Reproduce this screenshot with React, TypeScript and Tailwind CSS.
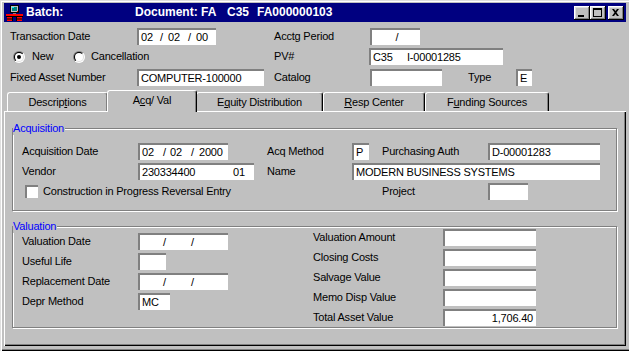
import React from "react";

function Field({ w, children, className = "" }: { w: string; children?: React.ReactNode; className?: string }) {
  return (
    <div
      className={`h-[17px] shrink-0 bg-white border-t-2 border-l-2 border-[#808080] flex items-center pl-[2px] whitespace-pre overflow-hidden ${w} ${className}`}
    >
      {children}
    </div>
  );
}

function Radio({ checked }: { checked?: boolean }) {
  return (
    <svg width="12" height="12" viewBox="0 0 12 12" className="shrink-0">
      <defs>
        <linearGradient id="rOuter" x1="0" y1="0" x2="1" y2="1">
          <stop offset="0.5" stopColor="#808080" />
          <stop offset="0.5" stopColor="#ffffff" />
        </linearGradient>
        <linearGradient id="rInner" x1="0" y1="0" x2="1" y2="1">
          <stop offset="0.5" stopColor="#000000" />
          <stop offset="0.5" stopColor="#dfdfdf" />
        </linearGradient>
      </defs>
      <circle cx="6" cy="6" r="6" fill="url(#rOuter)" />
      <circle cx="6" cy="6" r="5" fill="url(#rInner)" />
      <circle cx="6" cy="6" r="4" fill="#ffffff" />
      {checked && <circle cx="6" cy="6" r="2" fill="#000000" />}
    </svg>
  );
}

function TitleButton({ kind }: { kind: "min" | "max" | "close" }) {
  return (
    <div className="w-[16px] h-[14px] bg-[#c0c0c0] shadow-[inset_-1px_-1px_0_#000,inset_1px_1px_0_#fff,inset_-2px_-2px_0_#808080,inset_2px_2px_0_#dfdfdf]">
      <svg width="16" height="14" viewBox="0 0 16 14">
        {kind === "min" && <rect x="4" y="9" width="6" height="2" fill="#000" />}
        {kind === "max" && (
          <>
            <rect x="3.5" y="2.5" width="8" height="8" fill="none" stroke="#000" />
            <rect x="3" y="2" width="9" height="2" fill="#000" />
          </>
        )}
        {kind === "close" && (
          <path d="M4 3h2l1.5 2 1.5-2h2l-2.5 3.5 2.5 3.5h-2l-1.5-2-1.5 2h-2l2.5-3.5z" fill="#000" />
        )}
      </svg>
    </div>
  );
}

function AppIcon() {
  return (
    <svg width="18" height="17" viewBox="0 0 18 17" className="shrink-0">
      {/* monitor */}
      <rect x="5" y="1" width="9" height="8" fill="#000" />
      <rect x="6" y="2" width="7" height="6" fill="#c0c0c0" />
      <rect x="7" y="3" width="5" height="4" fill="#008080" />
      <rect x="7" y="3" width="2" height="1" fill="#00ffff" />
      <rect x="12" y="7" width="1" height="1" fill="#ff0000" />
      <rect x="8" y="9" width="3" height="1" fill="#808080" />
      {/* desk */}
      <rect x="1" y="10" width="17" height="2" fill="#ff0000" />
      <rect x="1" y="12" width="17" height="1" fill="#000" />
      <rect x="2" y="13" width="5" height="4" fill="#ff0000" />
      <rect x="12" y="13" width="5" height="4" fill="#ff0000" />
      <rect x="2" y="14.5" width="5" height="1" fill="#000" />
      <rect x="12" y="14.5" width="5" height="1" fill="#000" />
      <rect x="7" y="13" width="1" height="4" fill="#000" />
      <rect x="11" y="13" width="1" height="4" fill="#000" />
    </svg>
  );
}

function Tab({ w, selected, children }: { w: string; selected?: boolean; children: React.ReactNode }) {
  return (
    <div
      className={`${w} shrink-0 bg-[#c0c0c0] border-t border-l border-r border-t-white border-l-white border-r-black rounded-tl-[3px] rounded-tr-[3px] shadow-[inset_-1px_0_0_#808080] flex items-center justify-center ${
        selected ? "relative z-10 -mx-px -mb-px h-[22px] pb-[2px]" : "h-[19px]"
      }`}
    >
      {children}
    </div>
  );
}

function Group({ title, className, children }: { title: string; className: string; children: React.ReactNode }) {
  return (
    <div
      className={`relative ml-[8px] w-[605px] border border-[#808080] shadow-[inset_1px_1px_0_#fff,1px_1px_0_#fff] ${className}`}
    >
      <span className="absolute left-0 top-[-7px] bg-[#c0c0c0] text-[#0000ff] pr-px leading-[13px]">{title}</span>
      {children}
    </div>
  );
}

export default function App() {
  return (
    <div className="w-[629px] h-[351px] overflow-hidden bg-[#c0c0c0] font-['Liberation_Sans',Arial,sans-serif] text-[11px] leading-[13px] tracking-[-0.2px] text-black pt-[3px] pl-[4px] pr-[3px] shadow-[inset_1px_1px_0_#dfdfdf,inset_2px_2px_0_#fff,inset_0_-1px_0_#000,inset_0_-2px_0_#808080]">
      {/* Title bar */}
      <div className="h-[19px] bg-[#000080] flex items-center pl-px pr-[2px] text-white font-bold text-[12px] tracking-normal">
        <AppIcon />
        <span className="ml-[3px] w-[109px]">Batch:</span>
        <span className="w-[92px]">Document: FA</span>
        <span className="w-[30px]">C35</span>
        <span>FA000000103</span>
        <div className="ml-auto flex items-center">
          <TitleButton kind="min" />
          <TitleButton kind="max" />
          <div className="ml-[2px]">
            <TitleButton kind="close" />
          </div>
        </div>
      </div>

      {/* Header fields */}
      <div className="mt-[4px] pl-[6px]">
        <div className="h-[20px] flex items-center">
          <div className="w-[264px] flex items-center">
            <span className="w-[127px]">Transaction Date</span>
            <Field w="w-[79px]">
              <span className="w-[19px]">02</span>
              <span className="w-[8px]">/</span>
              <span className="w-[20px]">02</span>
              <span className="w-[8px]">/</span>
              <span>00</span>
            </Field>
          </div>
          <span className="w-[96px]">Acctg Period</span>
          <Field w="w-[50px]" className="justify-center pl-0">/</Field>
        </div>
        <div className="h-[21px] flex items-center">
          <div className="w-[264px] flex items-center">
            <div className="ml-[3px] w-[60px] flex items-center gap-[7px]">
              <Radio checked />
              <span>New</span>
            </div>
            <div className="flex items-center gap-[6px]">
              <Radio />
              <span>Cancellation</span>
            </div>
          </div>
          <span className="w-[95px]">PV#</span>
          <Field w="w-[134px]">
            <span className="w-[34px]">C35</span>
            <span>I-00001285</span>
          </Field>
        </div>
        <div className="h-[21px] flex items-center">
          <div className="w-[264px] flex items-center">
            <span className="w-[127px]">Fixed Asset Number</span>
            <Field w="w-[127px]">COMPUTER-100000</Field>
          </div>
          <span className="w-[96px]">Catalog</span>
          <Field w="w-[72px]" />
          <span className="ml-[26px] w-[48px]">Type</span>
          <Field w="w-[16px]">E</Field>
        </div>
      </div>

      {/* Tabs */}
      <div className="mt-[2px] h-[21px] pl-[3px] flex items-end">
        <Tab w="w-[101px]">
          <span>Descrip<u>t</u>ions</span>
        </Tab>
        <Tab w="w-[90px]" selected>
          <span>A<u>c</u>q/ Val</span>
        </Tab>
        <Tab w="w-[127px]">
          <span>E<u>q</u>uity Distribution</span>
        </Tab>
        <Tab w="w-[102px]">
          <span><u>R</u>esp Center</span>
        </Tab>
        <Tab w="w-[124px]">
          <span>F<u>u</u>nding Sources</span>
        </Tab>
      </div>

      {/* Tab panel */}
      <div className="w-[622px] h-[235px] pt-[17px] shadow-[inset_1px_1px_0_#fff,inset_-1px_-1px_0_#000,inset_-2px_-2px_0_#808080]">
        <Group title="Acquisition" className="h-[83px] pt-[12px] pl-[9px]">
          <div className="h-[20px] flex items-center">
            <span className="w-[116px]">Acquisition Date</span>
            <Field w="w-[90px]">
              <span className="w-[21px]">02</span>
              <span className="w-[7px]">/</span>
              <span className="w-[21px]">02</span>
              <span className="w-[8px]">/</span>
              <span>2000</span>
            </Field>
            <span className="ml-[39px] w-[85px]">Acq Method</span>
            <Field w="w-[17px]">P</Field>
            <span className="ml-[13px] w-[106px]">Purchasing Auth</span>
            <Field w="w-[112px]">D-00001283</Field>
          </div>
          <div className="h-[20px] flex items-center">
            <span className="w-[116px]">Vendor</span>
            <Field w="w-[116px]">
              <span className="w-[91px]">230334400</span>
              <span>01</span>
            </Field>
            <span className="ml-[13px] w-[85px]">Name</span>
            <Field w="w-[248px]">MODERN BUSINESS SYSTEMS</Field>
          </div>
          <div className="h-[20px] flex items-center">
            <div className="w-[360px] flex items-center">
              <div className="ml-[3px] w-[13px] h-[13px] bg-white border-t-2 border-l-2 border-[#808080]" />
              <span className="ml-[5px]">Construction in Progress Reversal Entry</span>
            </div>
            <span className="w-[106px]">Project</span>
            <Field w="w-[40px]" />
          </div>
        </Group>

        <Group title="Valuation" className="mt-[15px] h-[102px] flex">
          <div className="w-[300px] pl-[9px] pt-[4px]">
            <div className="h-[20px] flex items-center">
              <span className="w-[116px]">Valuation Date</span>
              <Field w="w-[90px]">
                <span className="w-[21px]" />
                <span className="w-[28px]">/</span>
                <span>/</span>
              </Field>
            </div>
            <div className="h-[20px] flex items-center">
              <span className="w-[116px]">Useful Life</span>
              <Field w="w-[28px]" />
            </div>
            <div className="h-[20px] flex items-center">
              <span className="w-[116px]">Replacement Date</span>
              <Field w="w-[90px]">
                <span className="w-[21px]" />
                <span className="w-[28px]">/</span>
                <span>/</span>
              </Field>
            </div>
            <div className="h-[20px] flex items-center">
              <span className="w-[116px]">Depr Method</span>
              <Field w="w-[32px]">MC</Field>
            </div>
          </div>
          <div>
            {["Valuation Amount", "Closing Costs", "Salvage Value", "Memo Disp Value"].map((label) => (
              <div key={label} className="h-[20px] flex items-center">
                <span className="w-[130px]">{label}</span>
                <Field w="w-[93px]" />
              </div>
            ))}
            <div className="h-[20px] flex items-center">
              <span className="w-[130px]">Total Asset Value</span>
              <Field w="w-[93px]" className="justify-end pr-[3px]">1,706.40</Field>
            </div>
          </div>
        </Group>
      </div>
    </div>
  );
}
